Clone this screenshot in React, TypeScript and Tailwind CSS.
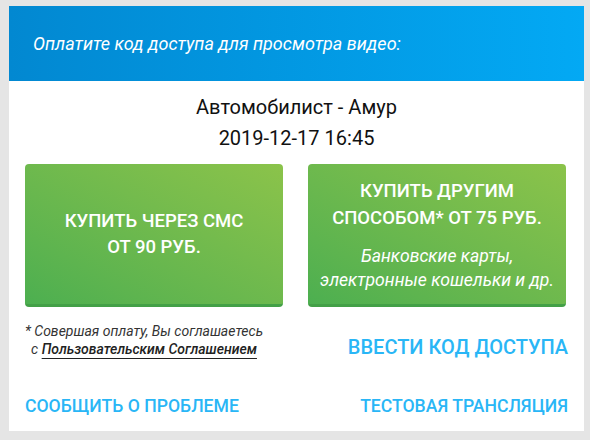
import React from "react";

export default function App() {
  return (
    <div className="w-[590px] h-[440px] bg-[#e5e5e5] pt-[6px] pl-[9px]" style={{ fontFamily: "Roboto, 'Noto Sans', sans-serif" }}>
      <div className="w-[575px] h-[425px] bg-white flex flex-col">
        <div className="h-[75px] shrink-0 bg-gradient-to-r from-[#0288d1] to-[#03a9f4] flex items-center pl-[24px]">
          <span className="text-white italic text-[18px] leading-none">Оплатите код доступа для просмотра видео:</span>
        </div>
        <div className="flex flex-col items-center pt-[11px] text-[20px] leading-[31px] text-[#111]">
          <div>Автомобилист - Амур</div>
          <div>2019-12-17 16:45</div>
        </div>
        <div className="flex gap-[25px] pl-[16px] mt-[10px]">
          <div className="w-[258px] h-[143px] rounded-[4px] bg-gradient-to-tr from-[#4caf50] to-[#8bc34a] border-b-[3px] border-[#43a047] flex flex-col items-center justify-center text-white text-center">
            <div className="font-medium text-[18.5px] leading-[26px] uppercase">Купить через СМС<br />от 90 руб.</div>
          </div>
          <div className="w-[258px] h-[143px] rounded-[4px] bg-gradient-to-tr from-[#4caf50] to-[#8bc34a] border-b-[3px] border-[#43a047] flex flex-col items-center pt-[13.5px] text-white text-center">
            <div className="font-medium text-[18.5px] leading-[27px] uppercase">Купить другим<br />способом* от 75 руб.</div>
            <div className="italic text-[17.6px] leading-[24px] mt-[12.5px]">Банковские карты,<br />электронные кошельки и др.</div>
          </div>
        </div>
        <div className="flex justify-between items-start pl-[16px] pr-[16px] pt-[15px]">
          <div className="text-center italic text-[14px] leading-[18px] text-[#333]">
            * Совершая оплату, Вы соглашаетесь<br />с <span className="underline font-medium text-[#222] underline-offset-[4px]">Пользовательским Соглашением</span>
          </div>
          <div className="text-[#29b6f6] font-medium text-[20px] leading-[24px] mt-[13px]">ВВЕСТИ КОД ДОСТУПА</div>
        </div>
        <div className="flex justify-between items-center pl-[16px] pr-[16px] mt-[35px]">
          <div className="text-[#29b6f6] font-medium text-[17.6px] leading-[24px]">СООБЩИТЬ О ПРОБЛЕМЕ</div>
          <div className="text-[#29b6f6] font-medium text-[17.6px] leading-[24px]">ТЕСТОВАЯ ТРАНСЛЯЦИЯ</div>
        </div>
      </div>
    </div>
  );
}
